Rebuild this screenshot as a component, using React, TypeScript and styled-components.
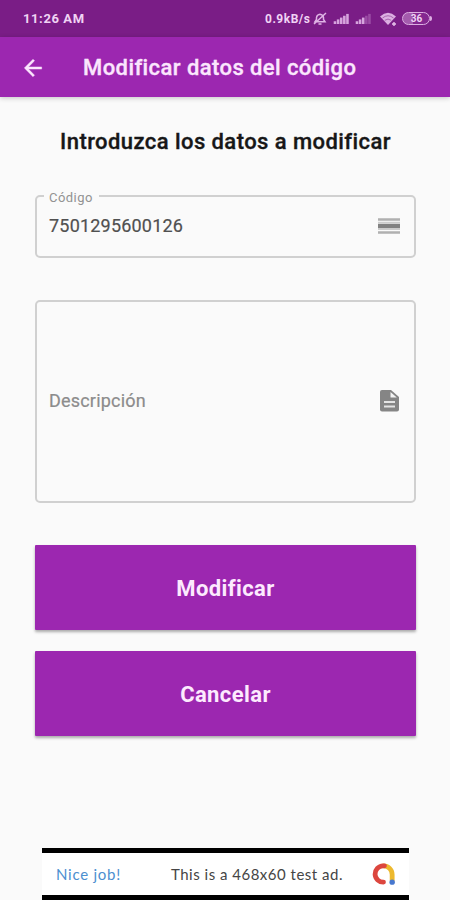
import React from "react";
import styled, { createGlobalStyle } from "styled-components";

const GlobalStyle = createGlobalStyle`
  * { box-sizing: border-box; }
  body { margin: 0; background: #fafafa; font-family: Roboto, sans-serif; }
`;

const Screen = styled.div`
  width: 450px;
  height: 900px;
  display: flex;
  flex-direction: column;
  background: #fafafa;
  overflow: hidden;
`;

const StatusBar = styled.div`
  height: 37px;
  flex: none;
  display: flex;
  align-items: center;
  justify-content: space-between;
  padding: 0 17px 0 23px;
  background: #7a1d86;
  color: #f0d3f4;
`;

const StatusText = styled.span<{ $size: number; $spacing: number }>`
  font-size: ${(p) => p.$size}px;
  font-weight: 700;
  letter-spacing: ${(p) => p.$spacing}px;
  line-height: 16px;
  white-space: nowrap;
`;

const StatusIcons = styled.div`
  display: flex;
  align-items: center;
  width: 168px;
  svg { display: block; flex: none; }
`;

const AppBar = styled.header`
  height: 60px;
  flex: none;
  display: flex;
  align-items: center;
  gap: 37px;
  padding: 1px 20px 0;
  background: #9c27b0;
  box-shadow: 0 1px 5px rgba(0, 0, 0, 0.22);
  color: #fbe6fd;
`;

const BackButton = styled.button`
  display: flex;
  width: 26px;
  height: 26px;
  padding: 0;
  border: 0;
  background: none;
  color: inherit;
`;

const Title = styled.h1`
  margin: 0;
  padding-top: 1px;
  font-size: 22px;
  font-weight: 500;
  letter-spacing: 0.42px;
  line-height: 30px;
  white-space: nowrap;
  -webkit-text-stroke: 0.35px currentColor;
`;

const Form = styled.main`
  flex: 1;
  display: flex;
  flex-direction: column;
  padding: 30px 34px 0 35px;
`;

const Heading = styled.h2`
  margin: 0 0 38px;
  font-size: 22px;
  font-weight: 500;
  letter-spacing: 0.43px;
  line-height: 30px;
  text-align: center;
  white-space: nowrap;
  color: #171717;
  -webkit-text-stroke: 0.35px currentColor;
`;

const Field = styled.fieldset<{ $height: number; $gap: number }>`
  height: ${(p) => p.$height}px;
  flex: none;
  min-width: 0;
  margin: 0 0 ${(p) => p.$gap}px;
  padding: 0 14px 0 12px;
  border: 2px solid #d0d0d0;
  border-radius: 5px;
`;

const Legend = styled.legend`
  height: 2px;
  margin-left: -5px;
  padding: 0 6px 0 5px;
  font-size: 13px;
  letter-spacing: 0.45px;
  line-height: 6px;
  color: #929292;
`;

const FieldRow = styled.div<{ $height: number }>`
  height: ${(p) => p.$height}px;
  display: flex;
  align-items: center;
  justify-content: space-between;
  color: #858585;
`;

const FieldText = styled.span<{ $filled?: boolean }>`
  font-size: 18px;
  letter-spacing: ${(p) => (p.$filled ? 0.2 : 0.2)}px;
  line-height: 24px;
  color: ${(p) => (p.$filled ? "#505050" : "#8c8c8c")};
  -webkit-text-stroke: 0.2px currentColor;
`;

const Action = styled.button`
  height: 85px;
  flex: none;
  margin-bottom: 21px;
  padding: 2px 0 0;
  border: 0;
  border-radius: 1px;
  background: #9c27b0;
  box-shadow: 0 2px 3px rgba(0, 0, 0, 0.32);
  color: #fdeafe;
  font: 700 22px/30px Roboto, sans-serif;
  letter-spacing: 0.4px;
`;

const AdBanner = styled.footer`
  width: 367px;
  height: 52px;
  flex: none;
  display: flex;
  align-items: center;
  margin-left: 42px;
  padding: 0 13px 0 14px;
  border: solid #000;
  border-width: 5px 0;
  background: #fff;
`;

const AdPraise = styled.span`
  width: 115px;
  font: 15px/20px Lato, sans-serif;
  letter-spacing: 0.75px;
  color: #4c8fd0;
`;

const AdText = styled.span`
  flex: 1;
  font: 15px/20px Lato, sans-serif;
  letter-spacing: 0.5px;
  white-space: nowrap;
  color: #454545;
`;

const MutedBell = () => (
  <svg width="16" height="16" viewBox="0 0 16 16" fill="none" stroke="#dfb4e5" strokeWidth="1.5">
    <path d="M3 10.700 4.500 8.500V6.500Q5 3.500 8 3.200 11 3.500 11.500 6.500V8.500l1.500 2.200ZM6.500 13h3M2 13 14 2" />
  </svg>
);

const Signal = ({ strength }: { strength: number }) => (
  <svg width="17" height="11" viewBox="0 0 17 12">
    {[3, 5, 7, 9, 11].map((h, i) => (
      <rect key={h} x={i * 3.4} y={12 - h} width="2.8" height={h} fill="#d6a4dd" opacity={i < strength ? 1 : 0.35} />
    ))}
  </svg>
);

const Wifi = () => (
  <svg width="17" height="14" viewBox="0 0 17 14">
    <path d="M0 4.5Q8-2.8 16 4.5L8 13Z" fill="#dcaee2" />
    <path d="M2.5 6Q8 1.5 13.5 6M4.8 8.3Q8 5.8 11.2 8.3" fill="none" stroke="#99509f" strokeWidth=".8" />
    <path d="M12 12h4M14 10v4" stroke="#e6c0ea" strokeWidth="1.4" />
  </svg>
);

const BatteryFrame = styled.div`
  display: flex;
  align-items: center;
  justify-content: center;
  width: 28px;
  height: 13px;
  border: 1.5px solid #dcaee2;
  border-radius: 7px;
  background: linear-gradient(90deg, #a45bad 0 40%, #842790 40%);
  font-size: 10px;
  font-weight: 700;
  line-height: 10px;
`;

const BatteryTip = styled.i`
  width: 2px;
  height: 5px;
  border-radius: 0 2px 2px 0;
  background: #dcaee2;
`;

const Spacer = styled.i<{ $w: number }>`
  width: ${(p) => p.$w}px;
  flex: none;
`;

const BackArrow = () => (
  <svg width="26" height="26" viewBox="0 0 24 24" fill="currentColor" stroke="currentColor" strokeWidth=".4">
    <path d="M20 11H7.830l5.590-5.590L12 4l-8 8 8 8 1.410-1.410L7.830 13H20v-2z" />
  </svg>
);

const LinesIcon = () => (
  <svg width="22" height="18" viewBox="0 0 22 18">
    <path d="M0 2.500h22M0 15.500h22" stroke="#b0b0b0" strokeWidth="2.600" />
    <path d="M0 5.500h22M0 12.300h22" stroke="#cdcdcd" strokeWidth="1.500" />
    <path d="M0 9h22" stroke="#828282" strokeWidth="4.500" />
  </svg>
);

const DocumentIcon = () => (
  <svg width="26" height="26" viewBox="0 0 26 26">
    <path d="M6 2h9l8 7v12.500q0 2-2 2H6q-2 0-2-2V4q0-2 2-2Z" fill="#858585" />
    <path d="M14.500 4v5.500h6.300Z" fill="#f4f4f4" />
    <path d="M8 14h11M8 18.500h11" stroke="#e4e4e4" strokeWidth="2" />
  </svg>
);

const DocumentSlot = styled.span`
  display: flex;
  margin-right: -2px;
`;

const AdMobLogo = () => (
  <svg width="25" height="24" viewBox="0 0 26 24" fill="none" strokeWidth="5" strokeLinecap="round">
    <path d="M13 3.500A9 9 0 0 1 22 12.500V19" stroke="#edb92e" />
    <path d="M14 3.500H12.500A8.500 8.500 0 1 0 13 20.500" stroke="#dc463e" />
    <circle cx="22" cy="20.500" r="2.800" fill="#4778cf" />
  </svg>
);

export default function App() {
  return (
    <Screen>
      <GlobalStyle />
      <StatusBar>
        <StatusText $size={13} $spacing={0.6}>11:26 AM</StatusText>
        <StatusIcons>
          <StatusText $size={12} $spacing={0.5}>0.9kB/s</StatusText>
          <Spacer $w={2} />
          <MutedBell />
          <Spacer $w={5} />
          <Signal strength={5} />
          <Spacer $w={5} />
          <Signal strength={3} />
          <Spacer $w={8} />
          <Wifi />
          <Spacer $w={5} />
          <BatteryFrame>36</BatteryFrame>
          <BatteryTip />
        </StatusIcons>
      </StatusBar>
      <AppBar>
        <BackButton aria-label="Volver"><BackArrow /></BackButton>
        <Title>Modificar datos del código</Title>
      </AppBar>
      <Form>
        <Heading>Introduzca los datos a modificar</Heading>
        <Field $height={63} $gap={42}>
          <Legend>Código</Legend>
          <FieldRow $height={58}>
            <FieldText $filled>7501295600126</FieldText>
            <LinesIcon />
          </FieldRow>
        </Field>
        <Field $height={203} $gap={42}>
          <FieldRow $height={198}>
            <FieldText>Descripción</FieldText>
            <DocumentSlot><DocumentIcon /></DocumentSlot>
          </FieldRow>
        </Field>
        <Action>Modificar</Action>
        <Action>Cancelar</Action>
      </Form>
      <AdBanner>
        <AdPraise>Nice job!</AdPraise>
        <AdText>This is a 468x60 test ad.</AdText>
        <AdMobLogo />
      </AdBanner>
    </Screen>
  );
}
